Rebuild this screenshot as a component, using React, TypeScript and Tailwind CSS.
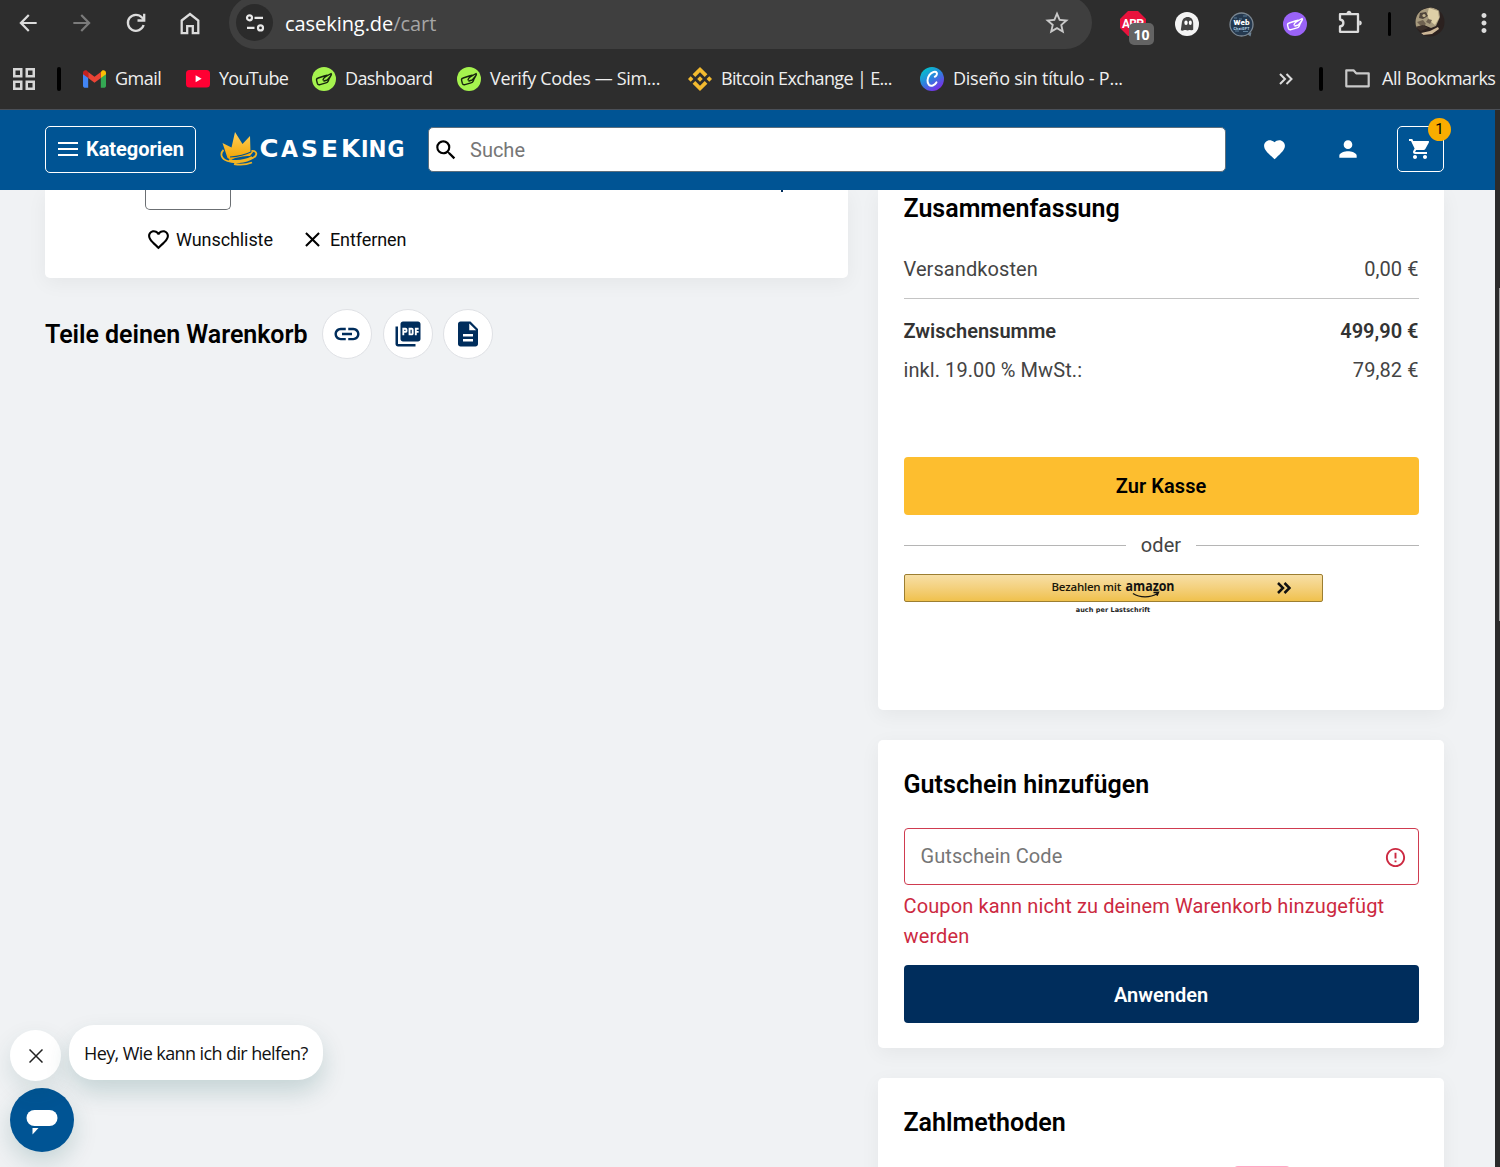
import type { ReactNode } from 'react';
import {
    MdArrowBack,
    MdArrowForward,
    MdClose,
    MdDescription,
    MdErrorOutline,
    MdFavorite,
    MdFavoriteBorder,
    MdLink,
    MdMoreVert,
    MdPerson,
    MdPictureAsPdf,
    MdSearch,
    MdShoppingCart,
    MdStarBorder,
} from 'react-icons/md';

interface BookmarkProps {
    icon: ReactNode;
    label: string;
    className: string;
    textClassName?: string;
}

function Bookmark({ icon, label, className, textClassName = '' }: BookmarkProps) {
    return (
        <div className={`flex shrink-0 items-center whitespace-nowrap ${className}`}>
            <span className="mr-[9px] flex w-[24px] shrink-0 justify-center">{icon}</span>
            <span className={textClassName}>{label}</span>
        </div>
    );
}

function HandIcon({ bg, fg }: { bg: string; fg: string }) {
    return (
        <svg width="24" height="24" viewBox="0 0 24 24" fill="none">
            <circle cx="12" cy="12" r="12" fill={bg} />
            <path
                d="M12.200 9 6.200 11c-1.300.4-1.900 1.300-1.600 2.400l.7 2.800c.4 1.300 1.400 1.800 2.700 1.400l6-1.700c1.200-.3 1.900-1 2.300-2l.5-1.400 2.600-4.800M11 12.800c.3-1.300 1.300-2.300 2.600-3.100l5.600-3.200M12 14l3.300-1 2.700-3.400M12.200 9l3-.9"
                stroke={fg}
                strokeWidth="1.400"
                strokeLinecap="round"
                strokeLinejoin="round"
            />
        </svg>
    );
}

function GmailIcon() {
    return (
        <svg width="23" height="18" viewBox="0 0 24 18">
            <path d="M0 3v13.400C0 17.300.7 18 1.600 18h3.800V7z" fill="#4285f4" />
            <path d="M24 3v13.400c0 .9-.7 1.600-1.600 1.600h-3.800V7z" fill="#34a853" />
            <path d="M18.600 1.700V8L24 4V2.500C24 .4 21.500-.8 19.800.5z" fill="#fbbc04" />
            <path d="M5.400 8V1.700L12 6.600l6.600-4.900V8L12 13z" fill="#ea4335" />
            <path d="M0 2.500V4l5.400 4V1.700L4.200.5C2.500-.8 0 .4 0 2.500z" fill="#c5221f" />
        </svg>
    );
}

function YouTubeIcon() {
    return (
        <svg width="24" height="18" viewBox="0 0 24 18">
            <rect width="24" height="17.500" rx="3.500" fill="#ff0033" />
            <path d="m9.600 5.300 6 3.500-6 3.500z" fill="#fff" />
        </svg>
    );
}

function BinanceIcon() {
    return (
        <svg width="24" height="24" viewBox="0 0 24 24" fill="#f3ba2f">
            <path d="m7.300 9.900 4.700-4.700 4.700 4.700 2.700-2.700L12 0 4.600 7.200zM0 12l2.700-2.700L5.400 12l-2.700 2.700zM7.300 14.100l4.700 4.700 4.700-4.700 2.700 2.700L12 24l-7.400-7.200zM18.600 12l2.700-2.700L24 12l-2.700 2.700zM12 9.200l2.800 2.800-2.800 2.800L9.200 12z" />
        </svg>
    );
}

function CanvaIcon() {
    return (
        <svg width="24" height="24" viewBox="0 0 24 24" fill="none">
            <defs>
                <linearGradient id="canva" x1="0.1" y1="0.1" x2="0.700" y2="1">
                    <stop offset="0" stopColor="#00c4cc" />
                    <stop offset="0.5" stopColor="#2f80dd" />
                    <stop offset="1" stopColor="#7d2ae8" />
                </linearGradient>
            </defs>
            <circle cx="12" cy="12" r="12" fill="url(#canva)" />
            <path
                d="M14.800 9.700c1.800-.6 2.600-2.700 1.900-4-1-1.800-5-.9-7.200 2.100-2.300 3.200-2.700 8-.6 10 2.200 2 5.800.5 7.500-2.400"
                stroke="#fff"
                strokeWidth="2"
                strokeLinecap="round"
            />
        </svg>
    );
}

function SiteSettingsIcon() {
    return (
        <svg width="20" height="20" viewBox="0 0 20 20" fill="none" stroke="#e8e8e8" strokeWidth="2.200">
            <circle cx="4.500" cy="4.800" r="2.500" />
            <path d="M9.500 4.800H18M2 14.900h7.500" />
            <circle cx="15.500" cy="14.900" r="2.500" />
        </svg>
    );
}

function ReloadIcon() {
    return (
        <svg width="20" height="20" viewBox="0 0 20 20" fill="none" stroke="#dcdcdc" strokeWidth="2.300">
            <path d="M17.600 12A8 8 0 1 1 16 4.600l1.800 2.200" />
            <path d="M18.200.8v6.700h-6.700" />
        </svg>
    );
}

function HomeIcon() {
    return (
        <svg width="20" height="23" viewBox="0 0 20 23" fill="none" stroke="#dcdcdc" strokeWidth="2.300">
            <path d="M1.700 8.500 10 2l8.300 6.500v12.700h-5.500v-7H7.200v7H1.700z" />
        </svg>
    );
}

function PuzzleIcon() {
    return (
        <svg width="25" height="25" viewBox="0 0 25 25" fill="none" stroke="#dcdcdc" strokeWidth="2.300" strokeLinejoin="round">
            <path d="M2 4.200h18v17.600H2v-5.300c4.500-.6 4.500-6.400 0-7z" />
            <path d="M8.500 3.300C8.700-.1 13.300-.1 13.500 3.300zM21.200 10.500c3.400.2 3.400 4.800 0 5z" fill="#dcdcdc" stroke="none" />
        </svg>
    );
}

function FolderIcon() {
    return (
        <svg width="25" height="19" viewBox="0 0 25 19" fill="none" stroke="#c9c9c9" strokeWidth="2.200" strokeLinejoin="round" className="shrink-0">
            <path d="M1.300 1.300h7.200l2.700 3h12.500v13H1.300z" />
        </svg>
    );
}

function AppsIcon() {
    return (
        <svg width="22" height="22" viewBox="0 0 22 22" fill="none" stroke="#d6d6d6" strokeWidth="2.500">
            <path d="M1.250 1.250h7v7h-7zM13.750 1.250h7v7h-7zM1.250 13.750h7v7h-7zM13.750 13.750h7v7h-7z" />
        </svg>
    );
}

function AdBlockIcon() {
    return (
        <div className="relative h-[26px] w-[26px]">
            <svg width="26" height="26" viewBox="0 0 26 26">
                <path d="M8 0h10l8 8v9l-8 8H8l-8-8V8z" fill="#e8123c" />
                <text x="2" y="17" fontSize="12" fontWeight="700" fill="#fff" fontFamily="Roboto, sans-serif" textLength="22">
                    ABP
                </text>
            </svg>
            <span className="absolute left-[9px] top-[12px] flex h-[22px] w-[25px] items-center justify-center rounded-[5px] bg-[#636363] text-[14px] font-bold text-white">
                10
            </span>
        </div>
    );
}

function GhostIcon() {
    return (
        <svg width="24" height="24" viewBox="0 0 24 24">
            <circle cx="12" cy="12" r="12" fill="#f4f4f4" />
            <path d="M5.800 18.200 6.800 11c.4-3.700 2.500-6 6-6 3.200 0 5.400 2.300 5.400 6v6.800c-1.500 1-2.600-.3-3.800.2-1.400.6-2.300.6-3.700 0-1.400-.5-2.800 1.500-4.900.2z" fill="#444" />
            <ellipse cx="11" cy="10.800" rx="1.700" ry="2.200" fill="#fff" />
            <ellipse cx="15.300" cy="10.800" rx="1.500" ry="2.200" fill="#fff" />
        </svg>
    );
}

function WebChatIcon() {
    return (
        <svg width="25" height="25" viewBox="0 0 25 25">
            <path d="M16 20.500h6.500l-1 4z" fill="#6b8194" />
            <circle cx="12.500" cy="12.500" r="11.500" fill="#25394f" stroke="#7b8792" strokeWidth="1.300" />
            <path d="M5 6h3M14 4h4M6 19h4M14 19.500h5M10 7h3" stroke="#5d7f99" />
            <text x="4.500" y="13" fontSize="8" fontWeight="900" fill="#fff" fontFamily="Roboto, sans-serif" textLength="16">
                Web
            </text>
            <text x="4.500" y="17.500" fontSize="3.500" fontWeight="700" fill="#b9d8ec" fontFamily="Roboto, sans-serif" textLength="16">
                ChatGPT
            </text>
        </svg>
    );
}

function Avatar() {
    return (
        <svg width="30" height="30" viewBox="0 0 30 30">
            <defs>
                <clipPath id="avatar">
                    <circle cx="15" cy="15" r="14.500" />
                </clipPath>
            </defs>
            <g clipPath="url(#avatar)">
                <rect width="30" height="30" fill="#2b211f" />
                <path d="M0 9 6 3l10-3 8 3 1 7-4 9-5 2-7-3-9 3z" fill="#a79a7d" />
                <path d="m14 1 9 3 1 7-4 7-5-4-3-6z" fill="#ded0a7" />
                <path d="m5 6 6-1 2 4-5 3-4-1z" fill="#51463c" />
                <path d="m13 12 4 1-2 4-4-2zM2 15l6-2 3 4-4 3z" fill="#6f6150" />
                <circle cx="9" cy="8.500" r="1.600" fill="#c4b58f" />
                <path d="m0 20 8-2 5 3-7 3z" fill="#3c302a" />
                <path d="m6 26 9-2 8-4 1 2-7 5-9 1z" fill="#cdb797" />
            </g>
        </svg>
    );
}

function DoubleChevron({ size, stroke, width }: { size: number; stroke: string; width: number }) {
    return (
        <svg width={size} height={size} viewBox="0 0 14 14" fill="none" stroke={stroke} strokeWidth={width}>
            <path d="m1 2 5 5-5 5M7.500 2l5 5-5 5" />
        </svg>
    );
}

function BrowserChrome() {
    return (
        <div className="h-[110px] shrink-0 overflow-hidden border-b border-[#4b4f56] bg-[#2d2d2d] font-['Open_Sans','Noto_Sans',sans-serif] text-[#efefef]">
            <div className="flex h-[49px] items-start">
                <div className="flex h-[46px] w-[229px] shrink-0 items-center pl-[15px] text-[#dcdcdc]">
                    <MdArrowBack size={26} />
                    <MdArrowForward size={26} className="ml-[28px] text-[#7b7b7b]" />
                    <span className="ml-[31px]">
                        <ReloadIcon />
                    </span>
                    <span className="ml-[34px]">
                        <HomeIcon />
                    </span>
                </div>
                <div className="-mt-[4px] flex h-[53px] w-[863px] shrink-0 items-center rounded-full bg-[#3f3f3f] pl-[7px] pr-[21px]">
                    <span className="flex h-[37px] w-[37px] items-center justify-center rounded-full bg-[#2b2b2b]">
                        <SiteSettingsIcon />
                    </span>
                    <span className="ml-[12px] flex-1 pt-[2px] text-[20px] tracking-[-0.060px] text-white">
                        caseking.de<span className="text-[#a5a5a5]">/cart</span>
                    </span>
                    <MdStarBorder size={28} className="text-[#c9c9c9]" />
                </div>
                <div className="flex h-[48px] flex-1 items-center pl-[28px]">
                    <div className="flex w-[55px]">
                        <AdBlockIcon />
                    </div>
                    <div className="flex w-[54px]">
                        <GhostIcon />
                    </div>
                    <div className="flex w-[54px]">
                        <WebChatIcon />
                    </div>
                    <div className="flex w-[55px]">
                        <HandIcon bg="#9a63f7" fg="#fff" />
                    </div>
                    <div className="-mt-[4px] w-[50px]">
                        <PuzzleIcon />
                    </div>
                    <span className="h-[24px] w-[3px] rounded-full bg-black" />
                    <div className="ml-[24px] -mt-[4px]">
                        <Avatar />
                    </div>
                    <MdMoreVert size={30} className="ml-[24px] -mt-[2px] shrink-0 text-[#dcdcdc]" />
                </div>
            </div>
            <div className="flex h-[59px] items-center text-[18px]">
                <div className="flex w-[82px] shrink-0 items-center pl-[13px]">
                    <AppsIcon />
                    <span className="ml-[22px] h-[24px] w-[4px] rounded-full bg-black" />
                </div>
                <Bookmark icon={<GmailIcon />} label="Gmail" className="w-[104px]" textClassName="tracking-[-0.5px]" />
                <Bookmark icon={<YouTubeIcon />} label="YouTube" className="w-[126px]" textClassName="tracking-[-0.700px]" />
                <Bookmark icon={<HandIcon bg="#a5f34e" fg="#17250e" />} label="Dashboard" className="w-[145px]" textClassName="tracking-[-0.600px]" />
                <Bookmark icon={<HandIcon bg="#a5f34e" fg="#17250e" />} label="Verify Codes — Sim..." className="w-[231px]" textClassName="tracking-[-0.330px]" />
                <Bookmark icon={<BinanceIcon />} label="Bitcoin Exchange | E..." className="w-[232px]" textClassName="tracking-[-0.650px]" />
                <Bookmark icon={<CanvaIcon />} label="Diseño sin título - P..." className="w-[359px]" textClassName="tracking-[-0.240px]" />
                <DoubleChevron size={14} stroke="#dcdcdc" width={2} />
                <span className="ml-[26px] h-[24px] w-[4px] shrink-0 rounded-full bg-black" />
                <span className="ml-[22px] mr-[12px] shrink-0">
                    <FolderIcon />
                </span>
                <span className="whitespace-nowrap tracking-[-0.5px]">All Bookmarks</span>
            </div>
        </div>
    );
}

const logoLetters = [
    { char: 'C', x: 39.500, width: 19, size: 25 },
    { char: 'A', x: 61, width: 17, size: 23 },
    { char: 'S', x: 81, width: 17, size: 23 },
    { char: 'E', x: 101, width: 17, size: 23 },
    { char: 'K', x: 121, width: 19, size: 25 },
    { char: 'I', x: 141, width: 7.500, size: 23 },
    { char: 'N', x: 148.500, width: 18, size: 23 },
    { char: 'G', x: 167.500, width: 17, size: 23 },
];

function Logo() {
    return (
        <svg width="186" height="36" viewBox="0 0 186 36" className="shrink-0">
            <defs>
                <linearGradient id="crown" x1="0" y1="0" x2="0" y2="1">
                    <stop offset="0" stopColor="#ffd05c" />
                    <stop offset="1" stopColor="#f3a300" />
                </linearGradient>
            </defs>
            <path d="M7.500 27 2.500 12l9 4.500L15 1l7.500 12L30 5l.5 16 3.500-1-4 5c-6 0-14 1-19 4z" fill="url(#crown)" />
            <path
                d="M3.500 19c-4 4-2 9 4 11 9 3 23 0 28-5 2-3 0-5.500-4-5M9 29c8 2 17 0 23-3M14 33c7 1.500 13 .5 18-1.500"
                fill="none"
                stroke="#f0b323"
                strokeWidth="1.800"
            />
            <path d="M10 26c7-.5 15-2 21-5" fill="none" stroke="#005494" strokeWidth="1.200" />
            {logoLetters.map((l) => (
                <text
                    key={l.x}
                    x={l.x}
                    y="25.500"
                    fontSize={l.size}
                    fontWeight="700"
                    fill="#fff"
                    fontFamily="'DejaVu Sans', sans-serif"
                    textLength={l.width}
                    lengthAdjust="spacingAndGlyphs"
                >
                    {l.char}
                </text>
            ))}
        </svg>
    );
}

function ShopHeader() {
    return (
        <header className="relative z-10 flex h-[80px] shrink-0 items-center bg-[#005494] pb-[2px] pl-[45px] pr-[51px]">
            <button className="flex h-[47px] w-[151px] shrink-0 items-center rounded-[5px] border border-white pl-[12px] text-white">
                <svg width="20" height="14" viewBox="0 0 20 14" stroke="#fff" strokeWidth="2">
                    <path d="M0 1h20M0 7h20M0 13h20" />
                </svg>
                <span className="ml-[8px] text-[20px] font-bold tracking-[-0.050px]">Kategorien</span>
            </button>
            <div className="ml-[24px]">
                <Logo />
            </div>
            <div className="ml-[22px] flex h-[45px] w-[798px] shrink-0 items-center rounded-[5px] border border-[#5d6f7d] bg-white pl-[4px]">
                <MdSearch size={26} className="mt-[2px] text-black" />
                <span className="ml-[11px] mt-[2px] text-[20px] text-[#767676]">Suche</span>
            </div>
            <div className="flex flex-1 items-center justify-end text-white">
                <MdFavorite size={25} />
                <MdPerson size={26} className="ml-[48px]" />
                <button className="relative ml-[36px] flex h-[46px] w-[47px] items-center justify-center rounded-[5px] border border-white pr-[2px]">
                    <MdShoppingCart size={24} />
                    <span className="absolute -top-[9px] left-[30px] flex h-[23px] w-[23px] items-center justify-center rounded-full bg-[#f9ad00] text-[15px] text-black">
                        1
                    </span>
                </button>
            </div>
        </header>
    );
}

function RoundButton({ children }: { children: ReactNode }) {
    return (
        <button className="flex h-[50px] w-[50px] items-center justify-center rounded-full border border-[#dfe1e5] bg-white text-[#002d5c]">
            {children}
        </button>
    );
}

function ArticleCard() {
    return (
        <section className="h-[88px] rounded-b-[5px] bg-white pl-[100px] shadow-[0_5px_20px_rgba(0,0,0,0.05)]">
            <div className="flex justify-between pr-[65px]">
                <div className="h-[20px] w-[86px] rounded-b-[5px] border border-t-0 border-[#6b6f73]" />
                {/* tail of the comma of the price, the rest is under the header */}
                <span className="h-[2px] w-[2px] bg-[#002d5c]" />
            </div>
            <div className="mt-[16px] flex items-center text-[18px] tracking-[-0.080px] text-[#0c0c0c]">
                <MdFavoriteBorder size={25} className="ml-[1px] text-black" />
                <span className="ml-[5px]">Wunschliste</span>
                <MdClose size={25} className="ml-[27px] text-black" />
                <span className="ml-[5px]">Entfernen</span>
            </div>
        </section>
    );
}

function AmazonButton() {
    return (
        <div className="flex w-[419px] flex-col items-center">
            <button className="flex h-[28px] w-full items-center rounded-[2px] border border-[#9c7e31] bg-linear-to-b from-[#f7dfa5] to-[#f0c14b] pl-[147px] font-['Open_Sans','Noto_Sans',sans-serif] text-[#1b1709]">
                <span className="-mt-[3px] whitespace-nowrap text-[11.500px] font-semibold tracking-[-0.250px]">Bezahlen mit</span>
                <svg width="54" height="28" viewBox="0 0 54 28" className="ml-[4px] shrink-0">
                    <text x="0.500" y="17" fontSize="15" fontWeight="700" fill="#111" textLength="49" lengthAdjust="spacingAndGlyphs">
                        amazon
                    </text>
                    <path d="M8 19.500c7 4.500 17 4.500 24.500 0M28.500 18.500l5-.2-1.500 3.500" fill="none" stroke="#111" strokeWidth="1.400" />
                </svg>
                <span className="ml-[98px]">
                    <DoubleChevron size={14} stroke="#111" width={2.5} />
                </span>
            </button>
            <span className="mt-[4px] font-['DejaVu_Sans',sans-serif] text-[6.500px] font-bold leading-[9px] tracking-[0.050px] text-[#222]">auch per Lastschrift</span>
        </div>
    );
}

function SummaryCard() {
    return (
        <section className="h-[520px] rounded-b-[5px] bg-white px-[25.500px] text-[20px] leading-[30px] tracking-[0.080px] text-[#444] shadow-[0_5px_20px_rgba(0,0,0,0.05)]">
            <h2 className="pt-[4px] text-[25px] font-semibold leading-[30px] tracking-normal text-black">Zusammenfassung</h2>
            <div className="mt-[30px] flex h-[45px] justify-between border-b border-[#c4c4c4]">
                <span>Versandkosten</span>
                <span>0,00 €</span>
            </div>
            <div className="mt-[17px] flex justify-between font-semibold tracking-normal text-[#333]">
                <span>Zwischensumme</span>
                <span>499,90 €</span>
            </div>
            <div className="mt-[9px] flex justify-between">
                <span>inkl. 19.00 % MwSt.:</span>
                <span>79,82 €</span>
            </div>
            <button className="mt-[72px] h-[58px] w-full rounded-[4px] bg-[#fdbe2f] font-semibold text-black">Zur Kasse</button>
            <div className="mt-[15px] flex items-center gap-[15px]">
                <span className="h-px flex-1 bg-[#b5b5b5]" />
                <span>oder</span>
                <span className="h-px flex-1 bg-[#b5b5b5]" />
            </div>
            <div className="mt-[14px] tracking-normal">
                <AmazonButton />
            </div>
        </section>
    );
}

function CouponCard() {
    return (
        <section className="mt-[30px] h-[308px] rounded-[5px] bg-white px-[25.500px] pt-[30px] text-[20px] leading-[30px] shadow-[0_5px_20px_rgba(0,0,0,0.05)]">
            <h2 className="text-[25px] font-semibold leading-[30px] tracking-[0.050px] text-black">Gutschein hinzufügen</h2>
            <div className="mt-[28px] flex h-[57px] items-center justify-between rounded-[4px] border border-[#cf3b50] pl-[16px] pr-[11px]">
                <span className="-mt-[2px] tracking-[0.080px] text-[#767676]">Gutschein Code</span>
                <MdErrorOutline size={23} className="mt-px text-[#cc2941]" />
            </div>
            <p className="mt-[6px] tracking-[0.130px] text-[#cc2941]">Coupon kann nicht zu deinem Warenkorb hinzugefügt werden</p>
            <button className="mt-[14px] h-[58px] w-full rounded-[4px] bg-[#002d5c] pt-[2px] font-semibold text-white">Anwenden</button>
        </section>
    );
}

function PaymentCard() {
    return (
        <section className="mt-[30px] h-[200px] rounded-t-[5px] bg-white px-[25.500px] pt-[30px] shadow-[0_5px_20px_rgba(0,0,0,0.05)]">
            <h2 className="text-[25px] font-semibold leading-[30px] text-black">Zahlmethoden</h2>
            <div className="ml-[330px] mt-[28px] h-[36px] w-[56px] rounded-[4px] bg-[#ffa8c5]" />
        </section>
    );
}

function ChatWidget() {
    return (
        <div className="absolute left-[10px] top-[1025px] font-['Open_Sans','Noto_Sans',sans-serif]">
            <div className="flex items-start">
                <button className="mt-[5px] flex h-[51px] w-[51px] items-center justify-center rounded-full bg-white shadow-[0_10px_25px_rgba(0,77,77,0.12)]">
                    <svg width="14" height="14" viewBox="0 0 14 14" stroke="#222" strokeWidth="1.500">
                        <path d="m.5.5 13 13M13.500.5l-13 13" />
                    </svg>
                </button>
                <div className="ml-[8px] flex h-[55px] w-[254px] items-center whitespace-nowrap rounded-[25px] bg-white pl-[15px] pt-[2px] text-[18px] tracking-[-0.600px] text-[#111] shadow-[0_12px_25px_rgba(0,77,77,0.18)]">
                    Hey, Wie kann ich dir helfen?
                </div>
            </div>
            <button className="mt-[7px] flex h-[64px] w-[64px] items-center justify-center rounded-full bg-[#005494] shadow-[0_10px_25px_rgba(0,77,77,0.18)]">
                <svg width="32" height="26" viewBox="0 0 32 26" fill="#fff" className="mt-[4px]">
                    <rect x="0.500" y="1" width="31" height="16" rx="8" />
                    <path d="M6.500 19h6L6.500 25.500z" />
                </svg>
            </button>
        </div>
    );
}

export default function App() {
    return (
        <div className="relative flex h-[1167px] w-[1500px] flex-col overflow-hidden bg-[#f0f2f4] font-[Roboto,sans-serif]">
            <BrowserChrome />
            <div className="flex min-h-0 flex-1">
                <div className="flex w-[1495px] flex-col">
                    <ShopHeader />
                    <main className="flex min-h-0 flex-1 gap-[30px] overflow-hidden pl-[45px]">
                        <div className="w-[803px]">
                            <ArticleCard />
                            <div className="mt-[31px] flex items-center gap-[10.500px]">
                                <h2 className="mr-[4.500px] w-[262px] whitespace-nowrap pt-[2px] text-[25px] font-semibold tracking-[-0.050px] text-black">
                                    Teile deinen Warenkorb
                                </h2>
                                <RoundButton>
                                    <MdLink size={30} />
                                </RoundButton>
                                <RoundButton>
                                    <MdPictureAsPdf size={30} />
                                </RoundButton>
                                <RoundButton>
                                    <MdDescription size={30} />
                                </RoundButton>
                            </div>
                        </div>
                        <div className="w-[566px]">
                            <SummaryCard />
                            <CouponCard />
                            <PaymentCard />
                        </div>
                    </main>
                </div>
                {/* Scrollbar */}
                <div className="flex flex-1 flex-col items-end bg-[#2b2b2b] pt-[178px]">
                    <span className="h-[333px] w-px bg-[#9f9f9f]" />
                </div>
            </div>
            <ChatWidget />
        </div>
    );
}
